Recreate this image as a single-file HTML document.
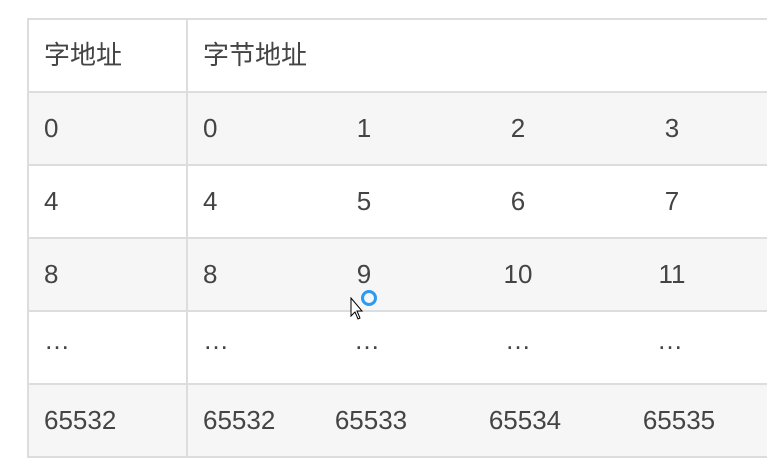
<!DOCTYPE html>
<html><head><meta charset="utf-8"><style>
body{margin:0;width:767px;height:468px;background:#fff;overflow:hidden;position:relative;font-family:"Liberation Sans","Noto Sans CJK SC",sans-serif;color:#444;}
.r{position:absolute;left:27px;width:740px;height:71px;border-top:2px solid #ddd;}
.g{background:#f6f6f6}
.t{position:absolute;top:0;height:71px;line-height:71px;font-size:26px;white-space:nowrap}
.c{transform:translateX(-50%)}
.e{top:-7px}
.vl{position:absolute;left:27px;top:18px;width:2px;height:440px;background:#ddd}
.vl2{position:absolute;left:186px;top:18px;width:2px;height:440px;background:#ddd}
</style></head><body>
<div class="r" style="top:18px"><span class="t" style="left:17px;font-size:26px">字地址</span><span class="t" style="left:176px;font-size:26px">字节地址</span></div>
<div class="r g" style="top:91px"><span class="t" style="left:17px">0</span><span class="t" style="left:176px">0</span><span class="t c" style="left:337px">1</span><span class="t c" style="left:491px">2</span><span class="t c" style="left:645px">3</span></div>
<div class="r" style="top:164px"><span class="t" style="left:17px">4</span><span class="t" style="left:176px">4</span><span class="t c" style="left:337px">5</span><span class="t c" style="left:491px">6</span><span class="t c" style="left:645px">7</span></div>
<div class="r g" style="top:237px"><span class="t" style="left:17px">8</span><span class="t" style="left:176px">8</span><span class="t c" style="left:337px">9</span><span class="t c" style="left:491px">10</span><span class="t c" style="left:645px">11</span></div>
<div class="r" style="top:310px"><span class="t e" style="left:17px">…</span><span class="t e" style="left:176px">…</span><span class="t c e" style="left:340px">…</span><span class="t c e" style="left:491px">…</span><span class="t c e" style="left:643px">…</span></div>
<div class="r g" style="top:383px;border-bottom:2px solid #ddd"><span class="t" style="left:17px">65532</span><span class="t" style="left:176px">65532</span><span class="t c" style="left:344px">65533</span><span class="t c" style="left:498px">65534</span><span class="t c" style="left:652px">65535</span></div>
<div class="vl"></div><div class="vl2"></div>
<div style="position:absolute;left:361px;top:290px;width:10px;height:10px;border:3px solid #2b9af3;border-radius:50%"></div>
<svg style="position:absolute;left:350px;top:297px" width="14" height="24" viewBox="0 0 14 24"><path d="M1 1 L1 19 L5 15 L8 22 L10 21 L7 14 L12 14 Z" fill="#fff" stroke="#000" stroke-width="1"/></svg>
</body></html>
